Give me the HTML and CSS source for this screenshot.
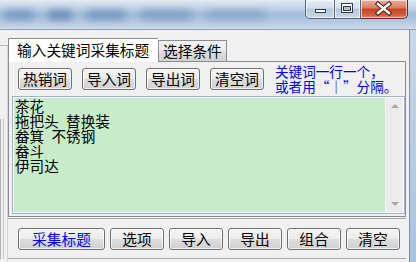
FILE: index.html
```html
<!DOCTYPE html>
<html lang="zh-CN">
<head>
    <meta charset="UTF-8">
    <title>采集标题</title>
    <link rel="stylesheet" href="styles.css">
</head>
<body>
    <div class="window">
        <!-- title bar (aero glass, blurred) -->
        <div class="titlebar">
            <div class="glass">
                <span class="smudge s1"></span>
                <span class="smudge s2"></span>
                <span class="smudge s3"></span>
                <span class="smudge s4"></span>
                <span class="smudge s5"></span>
            </div>
            <div class="caption">
                <span class="cbtn min">
                    <svg width="30" height="19" viewBox="0 0 30 19"><rect x="10.5" y="10.5" width="10" height="3" fill="#fff" stroke="#2e3b4c"/></svg>
                </span>
                <span class="cbtn max">
                    <svg width="26" height="19" viewBox="0 0 26 19"><rect x="7.5" y="4.5" width="11" height="9" fill="#fff" stroke="#2e3b4c"/><rect x="9.5" y="7.5" width="7" height="4" fill="#b4c3d3" stroke="#2e3b4c"/></svg>
                </span>
                <span class="cbtn close">
                    <svg width="47" height="19" viewBox="0 0 47 19"><path d="M18 5 L29 14 M29 5 L18 14" stroke="#4a1e16" stroke-width="4.5" stroke-linecap="square"/><path d="M18 5 L29 14 M29 5 L18 14" stroke="#fff" stroke-width="2.4" stroke-linecap="square"/></svg>
                </span>
            </div>
        </div>

        <div class="body">
            <div class="side"><div class="side-inner"></div></div>

            <div class="client">
                <div class="tabs">
                    <div class="tab active">输入关键词采集标题</div>
                    <div class="tab">选择条件</div>
                </div>

                <div class="panel">
                    <div class="toolbar">
                        <button class="btn">热销词</button>
                        <button class="btn">导入词</button>
                        <button class="btn">导出词</button>
                        <button class="btn">清空词</button>
                        <div class="hint">
                            <div>关键词一行一个，</div>
                            <div>或者用“|”分隔。</div>
                        </div>
                    </div>

                    <div class="editor">
                        <div class="lines">
                            <div class="line">茶花</div>
                            <div class="line">拖把头&ensp;替换装</div>
                            <div class="line">畚箕&ensp;不锈钢</div>
                            <div class="line">畚斗</div>
                            <div class="line">伊司达</div>
                        </div>
                        <div class="vscroll">
                            <span class="arrow up"></span>
                            <span class="arrow down"></span>
                        </div>
                    </div>
                </div>

                <div class="group">
                    <button class="btn wide blue">采集标题</button>
                    <button class="btn">选项</button>
                    <button class="btn">导入</button>
                    <button class="btn">导出</button>
                    <button class="btn">组合</button>
                    <button class="btn">清空</button>
                </div>
            </div>

            <div class="rframe"></div>
        </div>
    </div>
</body>
</html>
```

FILE: styles.css
```css
body {
    margin: 0;
    padding: 0;
    width: 416px;
    height: 262px;
    overflow: hidden;
    font-family: "Noto Sans CJK SC", "DejaVu Sans", sans-serif;
    background-color: #f0f0f0;
}
.window {
    width: 416px;
    height: 262px;
    display: flex;
    flex-direction: column;
}

/* title bar */
.titlebar {
    height: 29px;
    border-bottom: 1px solid #8fa2b8;
    display: flex;
    justify-content: space-between;
    align-items: flex-start;
    background: linear-gradient(#e3eaf2 0%, #c6d6e8 25%, #a3bcd9 50%, #b5cae1 75%, #cddbea 100%);
    overflow: hidden;
}
.glass {
    display: flex;
    align-items: center;
    gap: 14px;
    height: 29px;
    padding-left: 4px;
}
.smudge {
    display: block;
    height: 8px;
    border-radius: 4px;
    background-color: #6a8fbb;
    filter: blur(4px);
}
.s1 { width: 30px; }
.s2 { width: 24px; background-color: #5a80ae; }
.s3 { width: 40px; }
.s4 { width: 52px; background-color: #7898c0; }
.s5 { width: 60px; background-color: #86a4c7; }
.caption {
    display: flex;
    margin-right: 8px;
}
.cbtn {
    display: block;
    height: 19px;
    border: 1px solid #55667b;
    border-top: none;
    box-sizing: border-box;
    background: linear-gradient(#e6edf5 0%, #d4dfeb 45%, #b8c9dc 50%, #c9d7e6 100%);
    box-shadow: inset 0 0 0 1px rgba(255,255,255,0.6);
}
.cbtn svg {
    display: block;
    margin: -1px 0 0 -1px;
}
.min {
    width: 30px;
    border-radius: 0 0 0 5px;
}
.max {
    width: 26px;
    border-left: none;
}
.close {
    width: 47px;
    border-left: none;
    border-radius: 0 0 5px 0;
    border-color: #6a2a1c;
    background: linear-gradient(#eab0a0 0%, #db7a60 45%, #c5442a 50%, #d3603f 85%, #e59378 100%);
}

/* body */
.body {
    flex: 1;
    display: flex;
    min-height: 0;
}
.side {
    width: 7px;
    margin-top: 15px;
    border-top: 1px solid #b9b9b9;
    border-right: 1px solid #d6d6d6;
}
.side-inner {
    margin-top: 73px;
    height: 140px;
    width: 2px;
    border-left: 1px solid #b0b0b0;
    border-right: 1px solid #c8c8c8;
}
.client {
    width: 398px;
    padding-right: 3px;
    display: flex;
    flex-direction: column;
}
.rframe {
    width: 6px;
    border-left: 1px solid #7f91a6;
    background: linear-gradient(#c9d7e6, #b6cbe1 60%, #a9c3de);
}

/* tabs */
.tabs {
    display: flex;
    align-items: flex-end;
    padding-top: 8px;
    position: relative;
    z-index: 1;
}
.tab {
    height: 20px;
    padding: 0 4px;
    border: 1px solid #898c95;
    border-bottom: none;
    font-size: 14.7px;
    line-height: 20px;
    white-space: nowrap;
    color: #000;
    background: linear-gradient(#f3f3f3, #ebebeb 50%, #dddddd 51%, #d2d2d2);
}
.tab.active {
    width: 133px;
    height: 23px;
    padding: 0 8px;
    margin-bottom: -1px;
    line-height: 21px;
    background: #ffffff;
    border-right: none;
}

/* tab page */
.panel {
    height: 147px;
    padding: 6px 1px 1px 3px;
    border: 1px solid #898c95;
    background-color: #f0f0f0;
}
.toolbar {
    display: flex;
    align-items: center;
    gap: 10px;
    padding-left: 6px;
    height: 22px;
}
.hint {
    margin: -4px 0 -4px 1px;
    font-size: 13.6px;
    line-height: 15px;
    color: #0000ff;
    white-space: nowrap;
    font-feature-settings: "fwid";
}
.editor {
    margin-top: 6px;
    height: 116px;
    width: 391px;
    display: flex;
    border: 1px solid #9db3cc;
    box-shadow: inset 0 0 0 1px #ffffff;
    background-color: #c8ecc9;
}
.lines {
    flex: 1;
    padding: 1px 0 0 2px;
}
.line {
    font-size: 14.6px;
    line-height: 15px;
    white-space: nowrap;
    color: #000;
}
.vscroll {
    width: 17px;
    display: flex;
    flex-direction: column;
    justify-content: space-between;
    align-items: center;
    padding: 6px 0;
    background-color: #ececec;
    border-left: 1px solid #f6f6f6;
    margin: 1px 1px 1px 0;
}
.arrow {
    width: 0;
    height: 0;
    border-left: 4px solid transparent;
    border-right: 4px solid transparent;
}
.arrow.up {
    border-bottom: 4px solid #a8a8a8;
}
.arrow.down {
    border-top: 4px solid #a8a8a8;
}

/* buttons */
.btn {
    height: 22px;
    width: 54px;
    padding: 0;
    border: 1px solid #707070;
    border-radius: 3px;
    font-family: "Noto Sans CJK SC", sans-serif;
    font-size: 14.7px;
    line-height: 18px;
    color: #000;
    background: linear-gradient(#f4f4f4 0%, #ececec 48%, #dddddd 52%, #d0d0d0 100%);
    box-shadow: inset 0 0 0 1px rgba(255,255,255,0.7);
}
.btn.wide {
    width: 87px;
}
.btn.blue {
    color: #0000ff;
}

/* bottom group */
.group {
    margin-top: 1px;
    height: 41px;
    padding: 9px 0 0 10px;
    box-sizing: border-box;
    border-top: 1px solid #a9a9a9;
    border-bottom: 1px solid #a9a9a9;
    display: flex;
    align-items: flex-start;
    gap: 4px;
}
.group .btn + .btn {
    margin-left: 1px;
}
```
